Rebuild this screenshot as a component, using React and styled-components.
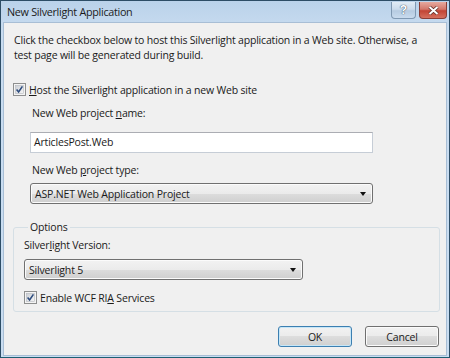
import React from "react";
import styled, { createGlobalStyle } from "styled-components";

const GlobalStyle = createGlobalStyle`
  html, body { margin: 0; padding: 0; background: #fff; }
  body { font-family: "Open Sans", "Liberation Sans", sans-serif; }
`

const Window = styled.div`
  width: 450px;
  height: 358px;
  box-sizing: border-box;
  border: 1px solid #2d4d66;
  border-bottom-color: #1d5f73;
  background: linear-gradient(#bad2ea, #c8dcf0 30px, #c9ddf1);
  display: flex;
  flex-direction: column;
`

const TitleBar = styled.div`
  height: 21px;
  flex: none;
  display: flex;
  align-items: flex-start;
  padding: 0 2px 0 6px;
`

const Title = styled.div`
  flex: 1;
  font-size: 10.8px;
  line-height: 21px;
  color: #1b1b1b;
  letter-spacing: -0.3px;
`

const CaptionButtons = styled.div`
  display: flex;
  gap: 3px;
  margin-top: 1px;
`

const CaptionButton = styled.div`
  width: ${p => p.$close ? 28 : 25}px;
  height: 17px;
  box-sizing: border-box;
  border: 1px solid ${p => p.$close ? "#8a3d36" : "#7f98b2"};
  border-top: none;
  border-radius: 0 0 4px 4px;
  background: ${p => p.$close
    ? "linear-gradient(#e6a99e, #d3786b 45%, #c24434 55%, #d6705e)"
    : "linear-gradient(#e1ebf5, #cbdbec 45%, #b6cbe1 55%, #c9dbee)"};
  display: flex;
  align-items: center;
  justify-content: center;
  color: #fff;
  font-family: "Liberation Sans", sans-serif;
  font-weight: bold;
  font-size: 12px;
  text-shadow: 0 0 1px #3c4f63, 0 0 1px #3c4f63;
`

const Body = styled.div`
  flex: 1;
  margin: 0 2px 1px 2px;
  border: 1px solid #a8bed5;
  background: #f0f0f0;
  padding: 10px 7px 0 9px;
  font-size: 10.5px;
  letter-spacing: -0.18px;
  color: #1a1a1a;
  display: flex;
  flex-direction: column;
`

const Intro = styled.p`
  margin: 0 0 0 1px;
  line-height: 15px;
`

const CheckRow = styled.label`
  display: flex;
  align-items: center;
  gap: 3px;
  height: 15px;
  margin-top: ${p => p.$top}px;
`

const U = styled.span`
  text-decoration: underline;
  text-underline-offset: 1px;
`

const Indent = styled.div`
  margin-left: 17px;
  width: 343px;
  display: flex;
  flex-direction: column;
`

const FieldLabel = styled.div`
  line-height: 15px;
  padding-left: ${p => p.$pad ?? 2}px;
  margin-top: ${p => p.$top}px;
`

const TextBox = styled.div`
  height: 21px;
  box-sizing: border-box;
  margin-top: ${p => p.$top}px;
  border: 1px solid #c6cdd6;
  border-top-color: #abadb3;
  background: #fff;
  padding-left: 3px;
  line-height: 19px;
`

const ComboBox = styled.div`
  height: 21px;
  width: ${p => p.$width ? p.$width + "px" : "auto"};
  box-sizing: border-box;
  margin-top: ${p => p.$top}px;
  border: 1px solid #707070;
  border-radius: 3px;
  background: linear-gradient(#f2f2f2, #ebebeb 50%, #dddddd 50%, #cfcfcf);
  display: flex;
  align-items: center;
  justify-content: space-between;
  padding: 0 6px 0 4px;
  box-shadow: inset 0 0 0 1px #fbfbfb;
`

const Arrow = styled.span`
  width: 0;
  height: 0;
  border-left: 3.5px solid transparent;
  border-right: 3.5px solid transparent;
  border-top: 4px solid #111;
`

const GroupBox = styled.fieldset`
  margin: 16px 0 0 0;
  padding: 0 0 0 10px;
  width: 427px;
  height: 92px;
  box-sizing: border-box;
  border: 1px solid #d5dfe5;
  border-radius: 3px;
  display: flex;
  flex-direction: column;
`

const Legend = styled.legend`
  padding: 0 2px;
  margin-left: 4px;
  line-height: 15px;
`

const ButtonRow = styled.div`
  display: flex;
  justify-content: flex-end;
  gap: 13px;
  margin-top: 14px;
`

const PushButton = styled.div`
  width: 74px;
  height: 21px;
  box-sizing: border-box;
  border: 1px solid ${p => p.$default ? "#3c7fb1" : "#707070"};
  border-radius: 3px;
  background: linear-gradient(#f2f2f2, #ebebeb 50%, #dddddd 50%, #cfcfcf);
  box-shadow: inset 0 0 0 1px ${p => p.$default ? "#c6e6f7" : "#fbfbfb"};
  display: flex;
  align-items: center;
  justify-content: center;
`

function CheckBox(){
  return (
    <svg width="13" height="13" viewBox="0 0 13 13">
      <defs>
        <linearGradient id="cbg" x1="0" y1="0" x2="1" y2="1">
          <stop offset="0" stopColor="#cbcfd5"/>
          <stop offset="1" stopColor="#f6f6f6"/>
        </linearGradient>
      </defs>
      <rect x="0.5" y="0.5" width="12" height="12" fill="#f4f4f4" stroke="#8e8f8f"/>
      <rect x="2.5" y="2.5" width="8" height="8" fill="url(#cbg)" stroke="#b4b8be" strokeWidth="0.6"/>
      <path d="M3.6 6.6 L5.6 9 L9.4 3.4" fill="none" stroke="#2d4c7e" strokeWidth="1.6"/>
    </svg>
  )
}

export default function App(){
  return (
    <>
      <GlobalStyle/>
      <Window>
        <TitleBar>
          <Title>New Silverlight Application</Title>
          <CaptionButtons>
            <CaptionButton>?</CaptionButton>
            <CaptionButton $close>
              <svg width="11" height="9" viewBox="0 0 11 9">
                <path d="M1.5 1 L9.5 8 M9.5 1 L1.5 8" stroke="#5a2a24" strokeWidth="3.4"/>
                <path d="M1.5 1 L9.5 8 M9.5 1 L1.5 8" stroke="#fff" strokeWidth="2"/>
              </svg>
            </CaptionButton>
          </CaptionButtons>
        </TitleBar>
        <Body>
          <Intro>
            Click the checkbox below to host this Silverlight application in a Web site. Otherwise, a<br/>
            test page will be generated during build.
          </Intro>
          <CheckRow $top={19}>
            <CheckBox/>
            <span><U>H</U>ost the Silverlight application in a new Web site</span>
          </CheckRow>
          <Indent>
            <FieldLabel $top={9}>New Web project <U>n</U>ame:</FieldLabel>
            <TextBox $top={11}>ArticlesPost.Web</TextBox>
            <FieldLabel $top={10}>New Web <U>p</U>roject type:</FieldLabel>
            <ComboBox $top={5}>
              <span>ASP.NET Web Application Project</span>
              <Arrow/>
            </ComboBox>
          </Indent>
          <GroupBox>
            <Legend>Options</Legend>
            <FieldLabel $pad={0} $top={3}>Silver<U>l</U>ight Version:</FieldLabel>
            <ComboBox $top={6} $width={279}>
              <span>Silverlight 5</span>
              <Arrow/>
            </ComboBox>
            <CheckRow $top={10}>
              <CheckBox/>
              <span>Enable WCF RI<U>A</U> Services</span>
            </CheckRow>
          </GroupBox>
          <ButtonRow>
            <PushButton $default>OK</PushButton>
            <PushButton>Cancel</PushButton>
          </ButtonRow>
        </Body>
      </Window>
    </>
  )
}
